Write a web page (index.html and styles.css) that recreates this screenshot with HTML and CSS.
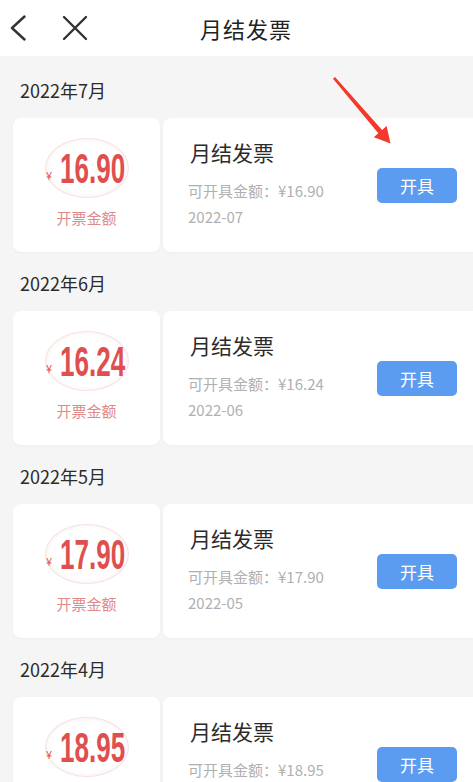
FILE: index.html
```html
<!DOCTYPE html>
<html lang="zh-CN">
<head>
    <meta charset="UTF-8">
    <meta name="viewport" content="width=device-width, initial-scale=1.0">
    <title>月结发票</title>
    <link rel="stylesheet" href="styles.css">
</head>
<body>
    <div class="header">
        <div class="header-icons">
            <svg class="icon-back" width="16" height="26" viewBox="0 0 16 26">
                <polyline points="14.5,1.5 2,13 14.5,24.5" fill="none" stroke="#333" stroke-width="2.4" stroke-linecap="round" stroke-linejoin="round"/>
            </svg>
            <svg class="icon-close" width="26" height="26" viewBox="0 0 26 26">
                <path d="M2 2 L24 24 M24 2 L2 24" fill="none" stroke="#333" stroke-width="2.4" stroke-linecap="round"/>
            </svg>
        </div>
        <h1 class="header-title">月结发票</h1>
    </div>

    <div class="list">
        <div class="section">
            <div class="section-label">2022年7月</div>
            <div class="row">
                <div class="amount-card">
                    <div class="stamp">
                        <span class="yen">¥</span><span class="amount-num">16.90</span>
                    </div>
                    <div class="amount-label">开票金额</div>
                </div>
                <div class="info-card">
                    <div class="info-text">
                        <div class="info-title">月结发票</div>
                        <div class="info-sub">可开具金额：¥16.90</div>
                        <div class="info-sub">2022-07</div>
                    </div>
                    <a href="#" class="issue-btn">开具</a>
                </div>
            </div>
        </div>

        <div class="section">
            <div class="section-label">2022年6月</div>
            <div class="row">
                <div class="amount-card">
                    <div class="stamp">
                        <span class="yen">¥</span><span class="amount-num">16.24</span>
                    </div>
                    <div class="amount-label">开票金额</div>
                </div>
                <div class="info-card">
                    <div class="info-text">
                        <div class="info-title">月结发票</div>
                        <div class="info-sub">可开具金额：¥16.24</div>
                        <div class="info-sub">2022-06</div>
                    </div>
                    <a href="#" class="issue-btn">开具</a>
                </div>
            </div>
        </div>

        <div class="section">
            <div class="section-label">2022年5月</div>
            <div class="row">
                <div class="amount-card">
                    <div class="stamp">
                        <span class="yen">¥</span><span class="amount-num">17.90</span>
                    </div>
                    <div class="amount-label">开票金额</div>
                </div>
                <div class="info-card">
                    <div class="info-text">
                        <div class="info-title">月结发票</div>
                        <div class="info-sub">可开具金额：¥17.90</div>
                        <div class="info-sub">2022-05</div>
                    </div>
                    <a href="#" class="issue-btn">开具</a>
                </div>
            </div>
        </div>

        <div class="section">
            <div class="section-label">2022年4月</div>
            <div class="row">
                <div class="amount-card">
                    <div class="stamp">
                        <span class="yen">¥</span><span class="amount-num">18.95</span>
                    </div>
                    <div class="amount-label">开票金额</div>
                </div>
                <div class="info-card">
                    <div class="info-text">
                        <div class="info-title">月结发票</div>
                        <div class="info-sub">可开具金额：¥18.95</div>
                        <div class="info-sub">2022-04</div>
                    </div>
                    <a href="#" class="issue-btn">开具</a>
                </div>
            </div>
        </div>
    </div>

    <!-- red annotation arrow drawn over the first card -->
    <svg class="arrow" width="80" height="90" viewBox="320 65 80 90">
        <polygon points="333,78.8 378.3,133.2 373.8,137.2 390.5,143.5 386.6,126 382.1,129.9 335,77" fill="#f2392c"/>
    </svg>
</body>
</html>
```

FILE: styles.css
```css
*{
    margin: 0;
    padding: 0;
    box-sizing: border-box;
}

body{
    width: 473px;
    height: 782px;
    overflow: hidden;
    position: relative;
    background: #f5f5f5;
    font-family: "Noto Sans CJK SC", "Noto Sans", sans-serif;
    color: #333;
}

.header{
    height: 56px;
    background: #fff;
    display: flex;
    align-items: center;
}

.header-icons{
    display: flex;
    align-items: center;
    gap: 36px;
    padding-left: 10px;
}

.header-title{
    margin-left: 112px;
    font-size: 22px;
    font-weight: 400;
    color: #222;
    letter-spacing: 1px;
    line-height: 30px;
}

.list{
    padding: 3px 0 0 13px;
}

.section-label{
    padding: 20px 0 17px 7px;
    font-size: 18px;
    line-height: 22px;
    color: #2b2b2b;
}

.row{
    display: flex;
    gap: 3px;
    height: 134px;
}

.amount-card{
    width: 147px;
    background: #fff;
    border-radius: 8px;
    display: flex;
    flex-direction: column;
    align-items: center;
    padding-top: 20px;
    box-shadow: 0 1px 3px rgba(0,0,0,0.03);
}

.stamp{
    width: 84px;
    height: 60px;
    border-radius: 50%;
    border: 1.5px solid #f4e2e2;
    box-shadow: inset 0 0 5px rgba(240,200,200,0.35);
    display: flex;
    align-items: center;
    justify-content: center;
    color: #e04f4f;
    padding-right: 2px;
}

.yen{
    font-family: "Liberation Sans", sans-serif;
    font-size: 10px;
    margin-top: 17px;
    margin-right: 8px;
}

.amount-num{
    display: inline-block;
    font-family: "Liberation Sans", sans-serif;
    font-weight: 700;
    font-size: 42px;
    line-height: 42px;
    transform: scaleX(0.62);
    transform-origin: left center;
    margin-right: -40px;
    margin-top: 1px;
}

.amount-label{
    margin-top: 10px;
    font-size: 15px;
    line-height: 20px;
    color: #df8a8a;
}

.info-card{
    flex: 1;
    background: #fff;
    border-radius: 8px 0 0 8px;
    display: flex;
    align-items: center;
    padding-left: 27px;
    padding-right: 16px;
    box-shadow: 0 1px 3px rgba(0,0,0,0.03);
}

.info-text{
    flex: 1;
    padding-bottom: 2px;
}

.info-title{
    font-size: 21px;
    line-height: 28px;
    color: #2b2b2b;
    margin-bottom: 12px;
}

.info-sub{
    font-size: 15px;
    line-height: 26px;
    color: #b0b0b0;
    margin-left: -2px;
}

.issue-btn{
    width: 80px;
    height: 35px;
    line-height: 35px;
    text-align: center;
    border-radius: 5px;
    background: #5c9cf0;
    color: #fff;
    font-size: 17px;
    text-decoration: none;
}

.arrow{
    position: absolute;
    left: 320px;
    top: 65px;
}
```
